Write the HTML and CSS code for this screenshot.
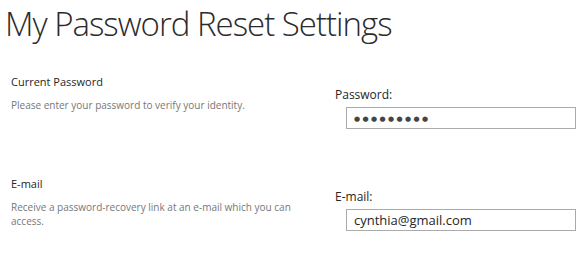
FILE: index.html
```html
<!DOCTYPE html>
<html lang="en">
<head>
  <meta charset="UTF-8" />
  <title>My Password Reset Settings</title>
  <link rel="stylesheet" href="styles.css">
</head>
<body>

<div class="page">
  <h1 class="title">My Password Reset Settings</h1>

  <div class="section section-password">
    <div class="info">
      <div class="info-title">Current Password</div>
      <div class="info-desc">Please enter your password to verify your identity.</div>
    </div>
    <div class="field">
      <label class="field-label" for="password">Password:</label>
      <input class="field-input dots" id="password" type="text" value="●●●●●●●●●">
    </div>
  </div>

  <div class="section section-email">
    <div class="info">
      <div class="info-title">E-mail</div>
      <div class="info-desc">Receive a password-recovery link at an e-mail which you can access.</div>
    </div>
    <div class="field">
      <label class="field-label" for="email">E-mail:</label>
      <input class="field-input" id="email" type="text" value="cynthia@gmail.com">
    </div>
  </div>
</div>

</body>
</html>
```

FILE: styles.css
```css
* {
  box-sizing: border-box;
  font-family: 'Open Sans', 'DejaVu Sans', sans-serif;
}

body {
  margin: 0;
  background: #fff;
  color: #444;
}

.page {
  padding: 0 0 0 5px;
}

.title {
  margin: 0;
  padding-top: 2px;
  font-size: 33px;
  font-weight: 300;
  color: #2b2b2b;
  line-height: 44px;
  letter-spacing: -1px;
}

.section {
  display: flex;
}

.section-password {
  margin-top: 28px;
}

.section-email {
  margin-top: 47px;
}

.info {
  width: 330px;
  padding-left: 6px;
}

.info-title {
  font-size: 11px;
  color: #262626;
  line-height: 16px;
}

.info-desc {
  margin-top: 8px;
  font-size: 10px;
  color: #777;
  line-height: 14px;
  width: 290px;
}

.field {
  padding-top: 12px;
}

.field-label {
  display: block;
  font-size: 12px;
  color: #262626;
  line-height: 18px;
}

.field-input {
  display: block;
  margin: 3px 0 0 11px;
  width: 230px;
  height: 22px;
  border: 1px solid #ababab;
  padding: 0 7px;
  font-size: 13px;
  color: #262626;
  outline: none;
}

.dots {
  font-size: 7px;
  letter-spacing: 2.4px;
  color: #444;
}
```
